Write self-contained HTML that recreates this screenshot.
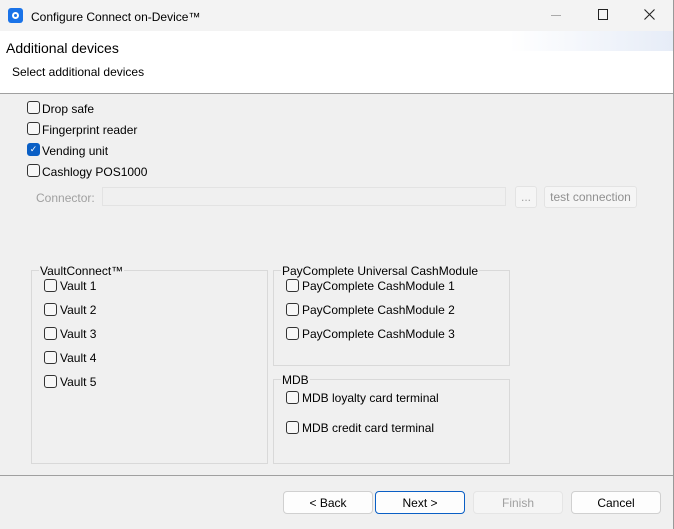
<!DOCTYPE html>
<html><head><style>
*{margin:0;padding:0;box-sizing:border-box}
body{width:674px;height:529px;background:#f0f0f0;font-family:"Liberation Sans",sans-serif;font-size:12px;color:#000;position:relative;overflow:hidden}
.a{position:absolute}
.cb{position:absolute;width:13px;height:13px;border:1px solid #333;border-radius:3px;background:#f7f7f7}
.t{position:absolute;white-space:nowrap;line-height:14px;margin-top:1px}
.grp{position:absolute;border:1px solid #d9d9d9}
.gl{position:absolute;background:#f0f0f0;padding:0 1px;line-height:14px;white-space:nowrap;margin-top:1px}
.btn{position:absolute;top:491px;height:23px;width:90px;border:1px solid #d0d0d0;border-radius:4px;background:#fdfdfd;text-align:center;line-height:22px}
</style></head><body>
<div class="a" style="left:0;top:0;width:674px;height:31px;background:#f3f3f3"></div>
<div class="a" style="left:8px;top:8px;width:15px;height:15px;background:#1a73e8;border-radius:3px"></div>
<div class="a" style="left:12px;top:12px;width:7px;height:7px;border:2px solid #fff;border-radius:50%"></div>
<div class="t" style="left:31px;top:9px">Configure Connect on-Device™</div>
<div class="a" style="left:551px;top:15px;width:10px;height:1px;background:#aaa"></div>
<div class="a" style="left:598px;top:9px;width:10px;height:11px;border:1px solid #222"></div>
<svg class="a" style="left:644px;top:9px" width="11" height="11"><path d="M0.5 0.5L10.5 10.5M10.5 0.5L0.5 10.5" stroke="#222" stroke-width="1.1"/></svg>
<div class="a" style="left:0;top:31px;width:674px;height:62px;background:#fff"></div>
<div class="a" style="left:400px;top:31px;width:274px;height:20px;background:linear-gradient(90deg,#fff 40%,#e6ecf7)"></div>
<div class="t" style="left:6px;top:40px;font-size:14px">Additional devices</div>
<div class="t" style="left:12px;top:64px">Select additional devices</div>
<div class="a" style="left:0;top:93px;width:674px;height:1px;background:#a0a0a0"></div>

<div class="cb" style="left:27px;top:101px"></div><div class="t" style="left:42px;top:101px">Drop safe</div>
<div class="cb" style="left:27px;top:122px"></div><div class="t" style="left:42px;top:122px">Fingerprint reader</div>
<div class="cb" style="left:27px;top:143px;background:#0a5fc5;border-color:#0a5fc5;color:#fff;font-size:9px;line-height:11px;text-align:center">✓</div><div class="t" style="left:42px;top:143px">Vending unit</div>
<div class="cb" style="left:27px;top:164px"></div><div class="t" style="left:42px;top:164px">Cashlogy POS1000</div>

<div class="t" style="left:36px;top:190px;color:#a0a0a0">Connector:</div>
<div class="a" style="left:102px;top:187px;width:404px;height:19px;border:1px solid #e3e3e3;background:#f0f0f0"></div>
<div class="a" style="left:515px;top:186px;width:22px;height:22px;border:1px solid #e3e3e3;border-radius:3px;background:#f5f5f5;color:#a0a0a0;text-align:center;line-height:20px">...</div>
<div class="a" style="left:544px;top:186px;width:93px;height:22px;border:1px solid #e3e3e3;border-radius:3px;background:#f5f5f5;color:#909090;text-align:center;line-height:21px">test connection</div>

<div class="grp" style="left:31px;top:270px;width:237px;height:194px"></div>
<div class="gl" style="left:39px;top:263px">VaultConnect™</div>
<div class="cb" style="left:44px;top:279px"></div><div class="t" style="left:60px;top:278px">Vault 1</div>
<div class="cb" style="left:44px;top:303px"></div><div class="t" style="left:60px;top:302px">Vault 2</div>
<div class="cb" style="left:44px;top:327px"></div><div class="t" style="left:60px;top:326px">Vault 3</div>
<div class="cb" style="left:44px;top:351px"></div><div class="t" style="left:60px;top:350px">Vault 4</div>
<div class="cb" style="left:44px;top:375px"></div><div class="t" style="left:60px;top:374px">Vault 5</div>

<div class="grp" style="left:273px;top:270px;width:237px;height:96px"></div>
<div class="gl" style="left:281px;top:263px">PayComplete Universal CashModule</div>
<div class="cb" style="left:286px;top:279px"></div><div class="t" style="left:302px;top:278px">PayComplete CashModule 1</div>
<div class="cb" style="left:286px;top:303px"></div><div class="t" style="left:302px;top:302px">PayComplete CashModule 2</div>
<div class="cb" style="left:286px;top:327px"></div><div class="t" style="left:302px;top:326px">PayComplete CashModule 3</div>

<div class="grp" style="left:273px;top:379px;width:237px;height:85px"></div>
<div class="gl" style="left:281px;top:372px">MDB</div>
<div class="cb" style="left:286px;top:391px"></div><div class="t" style="left:302px;top:390px">MDB loyalty card terminal</div>
<div class="cb" style="left:286px;top:421px"></div><div class="t" style="left:302px;top:420px">MDB credit card terminal</div>

<div class="a" style="left:0;top:475px;width:674px;height:1px;background:#a0a0a0"></div>
<div class="btn" style="left:283px">&lt; Back</div>
<div class="btn" style="left:375px;border-color:#0a5fc5">Next &gt;</div>
<div class="btn" style="left:473px;background:#f5f5f5;border-color:#e5e5e5;color:#a0a0a0">Finish</div>
<div class="btn" style="left:571px">Cancel</div>
<div class="a" style="left:673px;top:0;width:1px;height:529px;background:#999"></div>
</body></html>
